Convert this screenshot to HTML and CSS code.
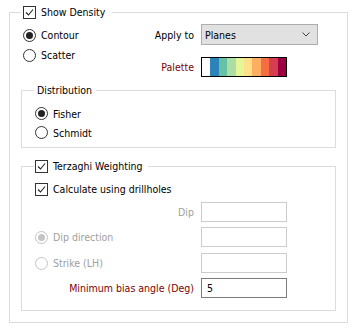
FILE: index.html
```html
<!DOCTYPE html>
<html lang="en">
<head>
    <meta charset="UTF-8">
    <meta name="viewport" content="width=device-width, initial-scale=1.0">
    <title>Density Options</title>
    <link rel="stylesheet" href="styles.css">
</head>
<body>
    <fieldset class="group outer">
        <legend class="legend-main">
            <span class="check"><svg viewBox="0 0 11 11"><polyline points="2,5.5 4.5,8 9,2.5"/></svg></span>Show Density
        </legend>

        <div class="top">
            <div class="radios">
                <div class="opt"><span class="radio on"></span>Contour</div>
                <div class="opt"><span class="radio"></span>Scatter</div>
            </div>
            <div class="fields">
                <span class="lbl">Apply to</span>
                <div class="select">
                    <span>Planes</span>
                    <svg class="chev" viewBox="0 0 8 5"><polyline points="0.5,0.5 4,4 7.5,0.5"/></svg>
                </div>
                <span class="lbl red">Palette</span>
                <div class="palette">
                    <span class="c1"></span><span class="c2"></span><span class="c3"></span><span class="c4"></span><span class="c5"></span>
                    <span class="c6"></span><span class="c7"></span><span class="c8"></span><span class="c9"></span><span class="c10"></span>
                </div>
            </div>
        </div>

        <fieldset class="group inner dist">
            <legend class="legend-text">Distribution</legend>
            <div class="opt short"><span class="radio on"></span>Fisher</div>
            <div class="opt short"><span class="radio"></span>Schmidt</div>
        </fieldset>

        <fieldset class="group inner terz">
            <legend class="legend-check">
                <span class="check"><svg viewBox="0 0 11 11"><polyline points="2,5.5 4.5,8 9,2.5"/></svg></span>Terzaghi Weighting
            </legend>
            <div class="opt calc">
                <span class="check"><svg viewBox="0 0 11 11"><polyline points="2,5.5 4.5,8 9,2.5"/></svg></span>Calculate using drillholes
            </div>

            <div class="grid">
                <span class="lbl dis">Dip</span>
                <div class="box dis"></div>

                <div class="opt dis"><span class="radio on off"></span>Dip direction</div>
                <div class="box dis"></div>

                <div class="opt dis"><span class="radio off"></span>Strike (LH)</div>
                <div class="box dis"></div>

                <span class="lbl red">Minimum bias angle (Deg)</span>
                <div class="box">5</div>
            </div>
        </fieldset>
    </fieldset>
</body>
</html>
```

FILE: styles.css
```css
* {
    box-sizing: border-box;
}
body {
    margin: 0;
    background-color: #fff;
    color: #000;
    font-family: "DejaVu Sans Condensed", "DejaVu Sans", sans-serif;
    font-size: 10.5px;
}
.group {
    border: 1px solid #dcdcdc;
    margin: 0;
    min-width: 0;
}
.group > legend {
    display: flex;
    align-items: center;
    height: 13px;
    line-height: 13px;
    white-space: nowrap;
}
.outer {
    margin: 6px 0 0 9px;
    width: 339px;
    padding: 0 11px 11px 11px;
}
.legend-main {
    padding: 0 7px 0 2px;
}
.legend-text {
    padding: 0 4px 0 3px;
}
.legend-check {
    padding: 0 5px 0 1px;
}

/* checkbox + radio */
.check {
    display: inline-block;
    width: 13px;
    height: 13px;
    border: 1px solid #333;
    background-color: #fff;
    margin-right: 5px;
    flex: none;
}
.check svg {
    display: block;
    width: 11px;
    height: 11px;
    fill: none;
    stroke: #222;
    stroke-width: 1.1;
}
.radio {
    display: inline-flex;
    align-items: center;
    justify-content: center;
    width: 13px;
    height: 13px;
    border: 1px solid #333;
    border-radius: 50%;
    background-color: #fff;
    margin-right: 5px;
    flex: none;
}
.radio.on::after {
    content: "";
    width: 7px;
    height: 7px;
    border-radius: 50%;
    background-color: #222;
}
.radio.off {
    border-color: #c4c4c4;
}
.radio.off.on::after {
    background-color: #c4c4c4;
}
.opt {
    display: flex;
    align-items: center;
    height: 20px;
}
.opt.short {
    height: 19px;
    margin-left: 1px;
}
.dis {
    color: #a0a0a0;
}
.red {
    color: #800000;
}

/* top section */
.top {
    display: flex;
    margin-top: 5px;
}
.radios {
    width: 120px;
    padding: 1px 0 0 2px;
}
.fields {
    display: grid;
    grid-template-columns: 53px 117px;
    grid-template-rows: 21px 20px;
    column-gap: 7px;
    row-gap: 12px;
    align-items: center;
}
.lbl {
    justify-self: end;
    white-space: nowrap;
}
.select {
    display: flex;
    align-items: center;
    justify-content: space-between;
    height: 21px;
    padding: 0 7px 0 3px;
    background-color: #e1e1e1;
    border: 1px solid #adadad;
}
.chev {
    width: 8px;
    height: 5px;
    fill: none;
    stroke: #444;
    stroke-width: 1;
}
.palette {
    display: flex;
    width: 86px;
    height: 20px;
    border: 1px solid #000;
}
.palette span {
    flex: 1;
}
.c1 { background-color: #ffffff; }
.c2 { background-color: #2b83ba; }
.c3 { background-color: #66c2a5; }
.c4 { background-color: #abdda4; }
.c5 { background-color: #e6f598; }
.c6 { background-color: #fee08b; }
.c7 { background-color: #fdae61; }
.c8 { background-color: #f46d43; }
.c9 { background-color: #d53e4f; }
.c10 { background-color: #9e0142; }

/* inner groups */
.inner {
    width: 315px;
}
.dist {
    margin-top: 7px;
    padding: 7px 0 5px 12px;
}
.terz {
    margin-top: 12px;
    padding: 6px 0 12px 12px;
}
.calc {
    margin-left: 1px;
}
.grid {
    display: grid;
    grid-template-columns: 159px 86px;
    grid-template-rows: 25px 26px 25px 20px;
    column-gap: 7px;
    margin: 3px 0 0 1px;
}
.grid .lbl {
    height: 20px;
    line-height: 20px;
}
.box {
    height: 20px;
    border: 1px solid #7a7a7a;
    padding-left: 5px;
    line-height: 18px;
    background-color: #fff;
}
.box.dis {
    border-color: #cccccc;
}
```
